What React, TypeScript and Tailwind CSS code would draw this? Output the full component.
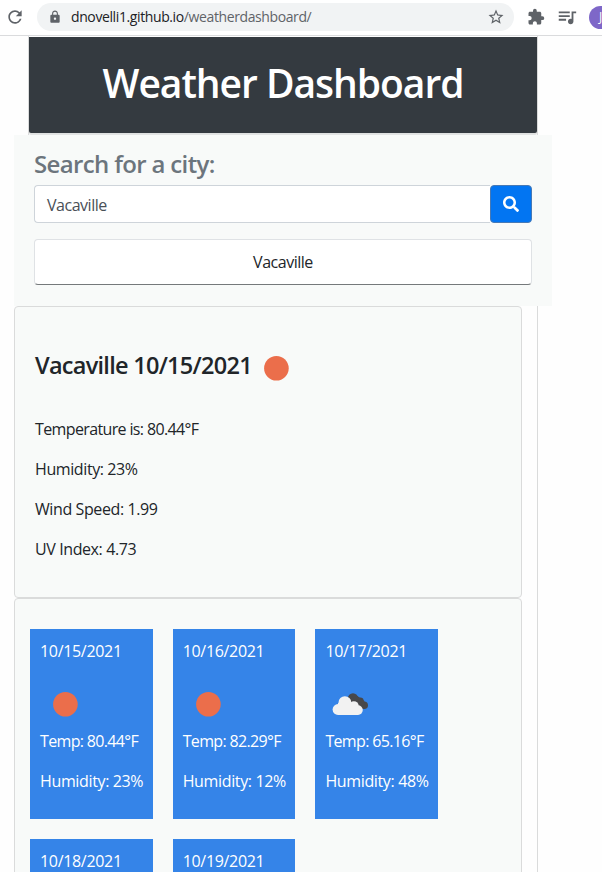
import { MdRefresh, MdLock, MdStarBorder, MdExtension, MdQueueMusic } from "react-icons/md";
import { FaSearch } from "react-icons/fa";

type Day = { date: string; icon?: "sun" | "clouds"; temp?: string; humidity?: string };

const days: Day[] = [
  { date: "10/15/2021", icon: "sun", temp: "80.44", humidity: "23" },
  { date: "10/16/2021", icon: "sun", temp: "82.29", humidity: "12" },
  { date: "10/17/2021", icon: "clouds", temp: "65.16", humidity: "48" },
  { date: "10/18/2021" },
  { date: "10/19/2021" },
];

function WeatherIcon({ kind }: { kind: "sun" | "clouds" }) {
  return (
    <svg viewBox="0 0 50 50" className="block h-[50px] w-[50px] shrink-0">
      {kind === "sun" ? (
        <circle cx="25.4" cy="25.2" r="12.3" fill="#eb6e4b" />
      ) : (
        <>
          <g fill="#48484a">
            <circle cx="28" cy="19.5" r="5.2" />
            <circle cx="35.3" cy="21.8" r="3.3" />
            <circle cx="39.2" cy="26.3" r="3.8" />
            <path d="M27.500 17h5l7 5-1 8h-6z" />
          </g>
          <g fill="#f2f2f2">
            <circle cx="13" cy="30.5" r="5.4" />
            <circle cx="19.9" cy="23.6" r="6.4" />
            <circle cx="28.9" cy="27" r="4.8" />
            <circle cx="33" cy="31.1" r="4.8" />
            <path d="M13 24h18v11.900h-18zM24.500 29h8.500v6.900h-8.500z" />
          </g>
        </>
      )}
    </svg>
  );
}

function ForecastCard({ day }: { day: Day }) {
  return (
    <div className="h-[190px] w-[122.7px] bg-[#3584e8] pt-[10px] pl-[10px] whitespace-nowrap text-white">
      <p className="h-10 tracking-[-0.32px]">{day.date}</p>
      {day.icon && (
        <>
          <WeatherIcon kind={day.icon} />
          <p className="h-10 tracking-[-0.66px]">Temp: {day.temp}°F</p>
          <p className="h-10 tracking-[-0.36px]">Humidity: {day.humidity}%</p>
        </>
      )}
    </div>
  );
}

export default function App() {
  return (
    <div className="h-[872px] w-[602px] overflow-hidden bg-[#fefefe] font-['Open_Sans','Noto_Sans',sans-serif] text-[16px] leading-6 text-[#212529]">
      <div className="flex h-9 items-center border-b border-[#dadbdd] bg-white pb-px text-[#5f6368]">
        <MdRefresh className="ml-[5px] size-5 shrink-0" />
        <div className="ml-3 flex h-7 w-[477px] shrink-0 items-center rounded-full bg-[#f1f3f4] pr-[9px] pl-[11px]">
          <MdLock className="size-[14px]" />
          <span className="ml-[9px] text-[14px] leading-5 tracking-[-0.39px]">
            <span className="text-[#202124]">dnovelli1.github.io</span>/weatherdashboard/
          </span>
          <MdStarBorder className="ml-auto size-[18px]" />
        </div>
        <MdExtension className="ml-[13px] size-[18px] shrink-0" />
        <MdQueueMusic className="ml-[11px] size-[22px] shrink-0" />
        <div className="ml-[11px] flex size-[23px] shrink-0 items-center justify-center rounded-full bg-[#7e67c8] text-[12px] text-white">
          J
        </div>
      </div>
      <main className="ml-7 flex h-[836px] w-[510px] flex-col border-x border-[#dadbdb] pt-px">
        <header className="mb-[2px] h-24 shrink-0 rounded-b-[2px] bg-[#343a40] pt-[22px] text-center text-[39px] leading-[48px] font-semibold tracking-[-1.03px] text-white shadow-[0_2px_1px_#dfe1e1]">
          <h1>Weather Dashboard</h1>
        </header>
        <section className="-ml-[15px] h-[171px] w-[538px] shrink-0 bg-[#f8faf9] px-5 pt-[14px]">
          <h2 className="mb-[7px] text-[24px] leading-[29px] font-semibold tracking-[-0.65px] text-[#6c757d]">
            Search for a city:
          </h2>
          <div className="flex h-[38px]">
            <div className="flex-1 rounded-l border border-r-0 border-[#ced4da] bg-white px-3 py-[7px] tracking-[-0.48px] text-[#495057]">
              Vacaville
            </div>
            <button className="flex w-[42px] items-center justify-center rounded border border-[#4779b5] bg-[#0275f2] text-white">
              <FaSearch className="size-4" />
            </button>
          </div>
          <div className="mt-4 h-[46px] rounded border border-[#dfe2e5] border-b-[#75797b] bg-white pt-[10px] text-center tracking-[-0.48px]">
            Vacaville
          </div>
        </section>
        <section className="-ml-[15px] h-[292px] w-[508px] shrink-0 rounded border border-[#dadbdb] bg-[#f8faf9] px-5 pt-[36px]">
          <div className="flex h-[52px]">
            <h3 className="w-[216px] pt-[8px] text-[23.5px] leading-[29px] font-semibold tracking-[-0.72px] whitespace-nowrap">Vacaville 10/15/2021</h3>
            <WeatherIcon kind="sun" />
          </div>
          <div className="flex flex-col gap-4 pt-[22px] tracking-[-0.4px]">
            <p className="tracking-[-0.63px]">Temperature is: 80.44°F</p>
            <p>Humidity: 23%</p>
            <p>Wind Speed: 1.99</p>
            <p>UV Index: 4.73</p>
          </div>
        </section>
        <section className="-ml-[15px] flex h-[460px] w-[508px] shrink-0 flex-wrap content-start gap-5 rounded border border-[#dadbdb] bg-[#f8faf9] pt-[30px] pr-[60px] pl-[15px]">
          {days.map((day) => (
            <ForecastCard key={day.date} day={day} />
          ))}
        </section>
      </main>
    </div>
  );
}
